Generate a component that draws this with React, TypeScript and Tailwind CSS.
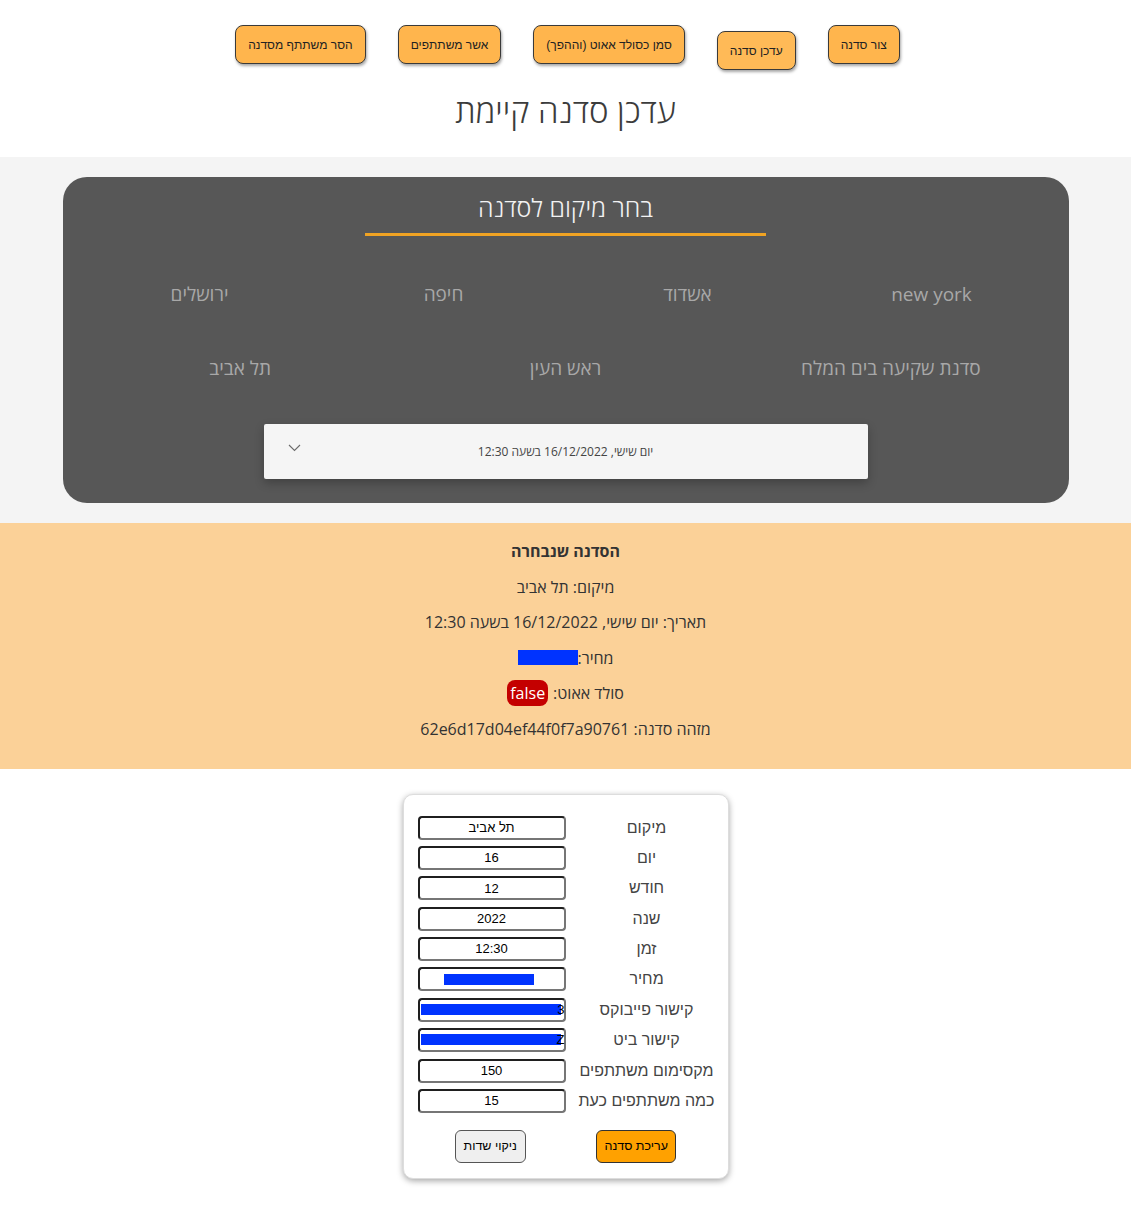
import React from "react";

const navButtons = [
  { label: "צור סדנה", active: false },
  { label: "עדכן סדנה", active: true },
  { label: "סמן כסולד אאוט (וההפך)", active: false },
  { label: "אשר משתתפים", active: false },
  { label: "הסר משתתף מסדנה", active: false },
];

const row1 = ["new york", "אשדוד", "חיפה", "ירושלים"];
const row2 = ["סדנת שקיעה בים המלח", "ראש העין", "תל אביב"];

const fields: { label: string; value: string; redact?: "short" | "long"; tail?: string }[] = [
  { label: "מיקום", value: "תל אביב" },
  { label: "יום", value: "16" },
  { label: "חודש", value: "12" },
  { label: "שנה", value: "2022" },
  { label: "זמן", value: "12:30" },
  { label: "מחיר", value: "", redact: "short" },
  { label: "קישור פייבוקס", value: "", redact: "long", tail: "3" },
  { label: "קישור ביט", value: "", redact: "long", tail: "Z" },
  { label: "מקסימום משתתפים", value: "150" },
  { label: "כמה משתתפים כעת", value: "15" },
];

export default function App() {
  return (
    <div dir="rtl" className="w-[1131px] min-h-[1220px] bg-white" style={{ fontFamily: "'Open Sans', 'Noto Sans', sans-serif" }}>
      {/* Nav */}
      <div className="flex justify-center items-start gap-8 pt-[25px] h-[80px] pl-[4px]">
        {navButtons.map((b) => (
          <button
            key={b.label}
            className={`h-[39px] px-3 rounded-lg border border-[#3a3a3a] text-[12px] text-[#222] shadow-[1px_2px_3px_rgba(0,0,0,0.35)] ${
              b.active ? "mt-[6px] bg-[#ffba57]" : "bg-[#ffb54d]"
            }`}
            style={{ fontFamily: "'Liberation Sans', Arial, sans-serif" }}
          >
            {b.label}
          </button>
        ))}
      </div>

      {/* Title */}
      <div className="h-[77px] flex justify-center items-start">
        <h1 className="text-[33px] font-light text-[#3c3c3c] leading-[62px]">עדכן סדנה קיימת</h1>
      </div>

      {/* Gray section with dark card */}
      <div className="bg-[#f4f4f4] py-5">
        <div className="mx-auto w-[1006px] h-[326px] rounded-[24px] bg-[#575757] flex flex-col items-center">
          <div className="pt-[11px] h-[56px] text-[25px] font-light text-[#f2f2f2] leading-[38px]">בחר מיקום לסדנה</div>
          <div className="w-[401px] h-[3px] bg-[#f0a323]" />
          <div className="w-[976px] grid grid-cols-4 mt-[43px] h-[30px] items-center">
            {row1.map((l) => (
              <div key={l} className="text-center text-[19px] text-[#a8a8a8]">
                {l}
              </div>
            ))}
          </div>
          <div className="w-[976px] grid grid-cols-3 mt-[44px] h-[30px] items-center">
            {row2.map((l) => (
              <div key={l} className="text-center text-[19px] text-[#a8a8a8]">
                {l}
              </div>
            ))}
          </div>
          <div className="mt-[41px] w-[604px] h-[55px] bg-[#f5f5f5] shadow-[0_4px_10px_rgba(0,0,0,0.25)] rounded-[2px] relative flex items-center justify-center">
            <span className="text-[12px] text-[#444]">יום שישי, 16/12/2022 בשעה 12:30</span>
            <svg className="absolute left-[24px] top-[20px]" width="13" height="8" viewBox="0 0 13 8" fill="none">
              <path d="M1 1 L6.5 6.5 L12 1" stroke="#6b6b6b" strokeWidth="1.1" />
            </svg>
          </div>
        </div>
      </div>

      {/* Selected workshop */}
      <div className="bg-[#fbd198] pt-[16px] pb-[28px] flex flex-col items-center gap-[11.5px] text-[16px] text-[#333]">
        <div className="h-[24px] leading-[24px] font-bold">הסדנה שנבחרה</div>
        <div className="h-[24px] leading-[24px]">מיקום: תל אביב</div>
        <div className="h-[24px] leading-[24px]">תאריך: יום שישי, 16/12/2022 בשעה 12:30</div>
        <div className="h-[24px] leading-[24px] flex items-center">
          <span>מחיר:</span>
          <span className="inline-block w-[60px] h-[15px] bg-[#0033ff]" />
        </div>
        <div className="h-[24px] leading-[24px] flex items-center gap-[5px]">
          <span>סולד אאוט:</span>
          <span className="inline-flex items-center justify-center h-[26px] px-[3px] rounded-lg bg-[#c40000] text-white">false</span>
        </div>
        <div className="h-[24px] leading-[24px]">מזהה סדנה: 62e6d17d04ef44f0f7a90761</div>
      </div>

      {/* Form card */}
      <div className="flex justify-center pt-[25px] pb-[41px]">
        <div
          className="w-[326px] bg-white rounded-[10px] border border-[#ddd] shadow-[0_2px_6px_rgba(0,0,0,0.35)] pt-[21px] pb-[15px] px-4"
          style={{ fontFamily: "'Liberation Sans', Arial, sans-serif" }}
        >
          <div className="flex flex-col gap-[6.4px]">
            {fields.map((f) => (
              <div key={f.label} className="flex items-center gap-4 h-[24px]">
                <div className="w-[130px] shrink-0 flex justify-center whitespace-nowrap text-[16px] text-[#444]">{f.label}</div>
                <div className="relative shrink-0 w-[148px] h-[24px] rounded-[4px] border-2 border-t-[#1f1f1f] border-l-[#1f1f1f] border-b-[#767676] border-r-[#767676] flex items-center justify-center text-[13px] text-black">
                  {f.value}
                  {f.redact === "short" && <span className="absolute left-[24px] top-[5px] w-[90px] h-[11px] bg-[#0033ff]" />}
                  {f.redact === "long" && (
                    <>
                      <span className="absolute left-[1px] top-[4px] w-[140px] h-[11px] bg-[#0033ff]" />
                      <span className="absolute right-[-1px] top-[2px] text-[13px] leading-[16px] text-black">{f.tail}</span>
                    </>
                  )}
                </div>
              </div>
            ))}
          </div>
          <div className="flex justify-around mt-[17px]">
            <button className="h-[33px] w-[80px] rounded-md border border-[#333] bg-[#ffa100] text-[12.5px] text-black">עריכת סדנה</button>
            <button className="h-[33px] w-[71px] rounded-md border border-[#555] bg-[#efefef] text-[12.5px] text-black">ניקוי שדות</button>
          </div>
        </div>
      </div>
    </div>
  );
}
